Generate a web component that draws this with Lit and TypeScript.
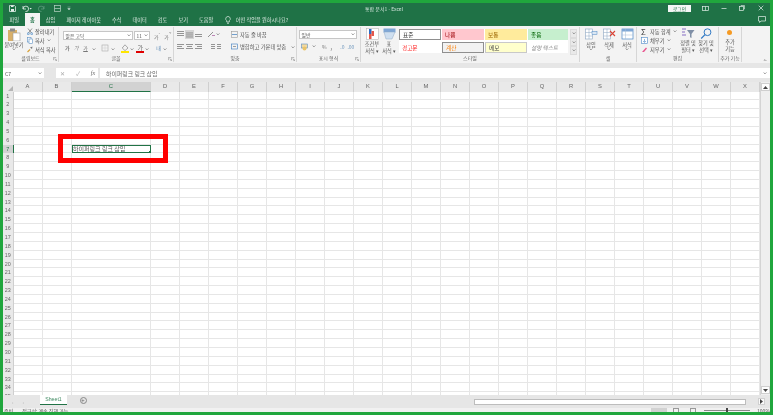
import { LitElement, html, css, svg } from "lit";
import { customElement } from "lit/decorators.js";

const COLS = ["A","B","C","D","E","F","G","H","I","J","K","L","M","N","O","P","Q","R","S","T","U","V","W","X"];
const TABS = ["파일","홈","삽입","페이지 레이아웃","수식","데이터","검토","보기","도움말"];
const STYLES = [
  ["표준", "s-normal"], ["나쁨", "s-bad"], ["보통", "s-neutral"], ["좋음", "s-good"],
  ["경고문", "s-warn"], ["계산", "s-calc"], ["메모", "s-note"], ["설명 텍스트", "s-expl"],
];

const chev = html`<svg class="chev" viewBox="0 0 5 3"><path d="M.7.5 2.5 2.3 4.3.5" fill="none" stroke="#666" stroke-width=".8"/></svg>`;
const launcher = html`<svg class="launch" viewBox="0 0 5 5"><path d="M.5.5h3v1M.5.5v3h1M2 2l2.3 2.3M4.5 2.8v1.7H2.8" fill="none" stroke="#777" stroke-width=".6"/></svg>`;

const ic = (w: number, h: number, body: unknown) => html`<svg class="ic" width=${w} height=${h} viewBox="0 0 ${w} ${h}">${body}</svg>`;
const lines = (pat: number[][]) => pat.map(([x, y, l]) => svg`<rect x=${x} y=${y} width=${l} height=".9" fill="#8a8a8a"/>`);

@customElement("app-root")
export class AppRoot extends LitElement {
  static styles = css`
    :host { display: block; width: 773px; height: 415px; overflow: hidden; }
    * { box-sizing: border-box; }
    .ic { flex: none; display: block; }
    .app { position: relative; width: 773px; height: 415px; border: 3px solid #20a63d; background: #e6e6e6; display: flex; flex-direction: column; overflow: hidden;
      font-family: "Noto Sans CJK KR", "Noto Sans", sans-serif; font-size: 5.5px; color: #555; filter: blur(.3px); }
    .title { height: 10px; background: #1f7246; display: flex; align-items: center; color: #e4efe9; flex: none; }
    .qat { display: flex; gap: 6px; align-items: center; padding-left: 6px; width: 362px; flex: none; }
    .doc { font-size: 5px; color: #cfe3d8; width: 303px; flex: none; }
    .title-right { flex: 1; display: flex; align-items: center; min-width: 0; }
    .login { background: #f4f6f5; color: #1f7246; width: 23px; height: 7px; line-height: 7px; text-align: center; font-size: 4.8px; flex: none; }
    .wins { display: flex; margin: 0 -3px 0 5px; align-items: center; flex: none; }
    .wins span { width: 18.5px; display: flex; justify-content: center; }
    .tabs { height: 13px; background: #1f7246; display: flex; align-items: stretch; flex: none; padding-left: 1px; color: #dbe9e1; font-size: 5.2px; }
    .tab { padding: 0 5.5px; display: flex; align-items: center; }
    .tab.on { background: #f3f3f3; color: #1f7246; font-weight: 700; }
    .tell { display: flex; align-items: center; gap: 5px; margin-left: 6px; }
    .comment { margin-left: auto; margin-right: 4px; display: flex; align-items: center; }

    .ribbon { height: 37px; background: #f3f3f3; display: flex; flex: none; }
    .group { display: flex; flex-direction: column; border-right: 1px solid #d6d6d6; flex: none; position: relative; margin: 1px 0; }
    .g-clip { width: 56px; } .g-font { width: 115px; } .g-align { width: 123px; } .g-num { width: 64px; }
    .g-style { width: 219px; } .g-cells { width: 57px; } .g-edit { width: 82px; } .g-add { width: 23px; }
    .body { flex: 1; display: flex; min-height: 0; }
    .glabel { height: 8px; line-height: 7px; text-align: center; font-size: 5px; color: #666; flex: none; }
    .launch { position: absolute; right: 1.5px; bottom: 1.5px; width: 4px; height: 4px; }
    .chev { width: 4px; height: 2.5px; flex: none; }
    .col { display: flex; flex-direction: column; }
    .big { display: flex; flex-direction: column; align-items: center; line-height: 7px; font-size: 5.2px; text-align: center; white-space: nowrap; padding-top: 1px; flex: none; }
    .row { display: flex; align-items: center; }
    .sel { background: #fff; border: 1px solid #c6c6c6; height: 9px; display: flex; align-items: center; justify-content: space-between; padding: 0 1.5px; font-size: 4.8px; flex: none; }
    .gl { color: #777; font-size: 5px; line-height: 8px; }
    .small { display: flex; align-items: center; gap: 2px; height: 9px; font-size: 5.3px; white-space: nowrap; }
    .collapse { margin: auto 3px 2px auto; }

    .clip-big { width: 22px; }
    .clip-small { margin-left: 2px; }
    .font-body { padding: 3px 0 0 4px; flex-direction: column; gap: 3px; }
    .font-row1 { gap: 1px; }
    .w-name { width: 70px; } .w-size { width: 16px; }
    .grow1 { margin-left: 3px; } .grow2 { margin-left: 3px; }
    .font-row2 { padding-left: 2px; height: 9px; }
    .gap-a { margin-left: 4.5px; }
    .b { font-weight: 700; } .i { font-style: italic; } .u { text-decoration: underline; }
    .phon { color: #4c7fb0; }
    .ml5 { margin-left: 5px; } .ml6 { margin-left: 6px; } .ml2 { margin-left: 2px; } .ml7 { margin-left: 7px; } .ml1 { margin-left: 1px; } .ml3 { margin-left: 3px; }
    .ml4 { margin-left: 4px; }

    .align-body { padding: 3px 0 0 2px; }
    .align-col { gap: 3px; width: 55px; }
    .align-wrap { gap: 3px; }
    .sq { display: flex; width: 9px; height: 9px; align-items: center; justify-content: center; flex: none; }
    .sq.on { background: #d4d4d4; }
    .angle { margin-left: 4px; display: flex; align-items: center; gap: 1px; }

    .num-body { padding: 3px 3px 0 2px; flex-direction: column; gap: 3px; }
    .w-num { width: 58px; }
    .num-row { padding-left: 2px; height: 9px; gap: 3px; }
    .dec { color: #6f97bd; }

    .big-cond { width: 18px; margin-left: 2px; }
    .big-table { width: 16px; }
    .gallery { display: grid; grid-template-columns: 42px 42px 42px 40px; grid-template-rows: 11px 11px; gap: 2px 1px; margin: 2px 0 0 2px; background: #fff; height: 24px; flex: none; }
    .st { display: flex; align-items: center; padding-left: 3px; font-size: 5.6px; }
    .s-normal { background: #fff; border: 1px solid #8f8f8f; color: #333; }
    .s-bad { background: #ffc7ce; color: #9c0006; }
    .s-neutral { background: #ffeb9c; color: #9c6500; }
    .s-good { background: #c6efce; color: #006100; }
    .s-warn { color: #ff2020; }
    .s-calc { background: #f2f2f2; color: #fa7d00; border: 1px solid #8f8f8f; }
    .s-note { background: #ffffcc; border: 1px solid #c9c9c9; color: #444; }
    .s-expl { color: #8a8a8a; font-style: italic; }
    .scroller { display: flex; flex-direction: column; width: 7px; height: 26px; margin: 2px 0 0 2px; }
    .scroller span { flex: 1; background: #e9e9e9; border: 1px solid #dcdcdc; display: flex; align-items: center; justify-content: center; }

    .cells-body { padding-left: 2.5px; gap: 1px; }
    .big-cell { width: 17px; }
    .cell-label { margin-top: 1px; }
    .edit-body { padding-left: 4px; }
    .edit-col { width: 38px; }
    .sigma { font-size: 8px; color: #444; line-height: 8px; width: 7px; }
    .big-edit { width: 18px; }
    .add-body { justify-content: center; }
    .add-big { padding-top: 3px; }
    .dot { width: 5px; height: 5px; border-radius: 50%; background: #f59a23; margin-bottom: 3px; }

    .gap1 { height: 5px; flex: none; background: #e6e6e6; }
    .fbar { height: 10px; display: flex; flex: none; }
    .namebox { width: 41px; background: #fff; display: flex; align-items: center; justify-content: space-between; padding: 0 2px; font-size: 5.2px; }
    .fdots { width: 12px; }
    .fbtns { width: 42px; background: #fff; display: grid; grid-template-columns: 12px 16px 10px; gap: 2px; align-items: center; justify-items: center; color: #aaa; font-size: 6px; }
    .fx { font-style: italic; color: #666; font-family: "Liberation Serif", serif; }
    .finput { flex: 1; margin-left: 2px; background: #fff; display: flex; align-items: center; padding-left: 6px; font-size: 5.9px; color: #666; }
    .fend { margin-left: auto; margin-right: 3px; display: flex; }
    .gap2 { height: 4px; flex: none; background: #e6e6e6; }

    .sheetwrap { flex: 1; display: flex; min-height: 0; overflow: hidden; background: #fff; }
    .grid { width: 757px; display: grid; grid-template-columns: 10.5px 29px 29px 79.5px repeat(21, 29px); grid-template-rows: 9.5px repeat(35, 8.85px); flex: none; overflow: hidden; align-content: start; }
    .ch { background: #e9e9e9; border-right: 1px solid #cfcfcf; text-align: center; font-size: 5.8px; line-height: 9px; color: #666; font-family: "Liberation Sans", sans-serif; }
    .ch.on { background: #d2d2d2; border-bottom: 1px solid #217346; color: #217346; }
    .corner { background: #e9e9e9; position: relative; }
    .tri { position: absolute; right: 1px; bottom: 1px; width: 0; height: 0; border-left: 5px solid transparent; border-bottom: 5px solid #b5b5b5; }
    .rh { background: #e9e9e9; border-right: 1px solid #cfcfcf; text-align: center; font-size: 5.4px; line-height: 8.5px; color: #666; font-family: "Liberation Sans", sans-serif; }
    .rh.on { background: #d2d2d2; border-right: 1px solid #217346; color: #217346; }
    .c { border-right: 1px solid #e6e6e6; border-bottom: 1px solid #e6e6e6; overflow: visible; white-space: nowrap; }
    .c.active { outline: 1px solid #217346; outline-offset: -1px; font-size: 6px; line-height: 8.5px; padding-left: 1.5px; color: #555; position: relative; }
    .handle { position: absolute; right: -1px; bottom: -1px; width: 2.5px; height: 2.5px; background: #217346; }
    .vscroll { flex: 1; background: #efefef; border-left: 1px solid #d4d4d4; display: flex; flex-direction: column; justify-content: space-between; align-items: center; padding: 1px 0; }
    .vb { width: 9px; height: 8px; background: #fdfdfd; border: 1px solid #cfcfcf; display: flex; align-items: center; justify-content: center; }

    .sheetbar { height: 13px; flex: none; background: #e6e6e6; display: flex; align-items: flex-start; }
    .navs { width: 37px; display: flex; gap: 9px; padding: 3px 0 0 9px; color: #b5b5b5; font-size: 5px; line-height: 7px; }
    .stab { width: 27px; height: 10px; background: #fff; border-bottom: 1px solid #217346; color: #3f8a62; font-size: 5.2px; line-height: 9px; text-align: center; font-family: "Liberation Sans", sans-serif; }
    .plus { margin: 2px 0 0 12.5px; width: 7px; height: 7px; border: 1px solid #888; border-radius: 50%; display: flex; align-items: center; justify-content: center; color: #666; font-size: 6px; line-height: 5px; }
    .hs { margin: 4px 0 0 auto; width: 272px; height: 6px; background: #fff; border: 1px solid #bdbdbd; }
    .hb { margin: 3px 5px 0 12px; width: 7px; height: 7px; background: #fafafa; border: 1px solid #d0d0d0; display: flex; align-items: center; justify-content: center; }
    .status { height: 4px; flex: none; background: #f1f1f1; display: flex; font-size: 5px; line-height: 5px; color: #555; overflow: hidden; padding-left: 1px; }
    .status .mid { margin-left: 9px; }
    .views { margin-left: auto; display: flex; align-items: flex-start; }
    .views i { display: block; width: 16.5px; height: 4px; }
    .views .cur { background: #d2d2d2; }
    .views .mark { position: relative; }
    .views .mark::after { content: ""; position: absolute; left: 6px; top: 0; width: 4px; height: 4px; border: 1px solid #999; }
    .zoom { width: 46px; height: 1px; background: #888; margin: 2px 7px 0 4px; position: relative; }
    .zoom::after { content: ""; position: absolute; left: 22px; top: -2px; width: 2px; height: 4px; background: #444; }

    .redbox { position: absolute; left: 55px; top: 131px; width: 110px; height: 29px; border: 5px solid #ff0000; }
  `;

  private tabsRow() {
    return html`<div class="tabs">
      ${TABS.map((t, i) => html`<div class="tab ${i === 1 ? "on" : ""}">${t}</div>`)}
      <div class="tell">
        <svg width="6" height="8" viewBox="0 0 6 8"><path d="M3 .5a2.3 2.3 0 0 0-1.3 4.2V6h2.6V4.7A2.3 2.3 0 0 0 3 .5zM2 7.3h2" fill="none" stroke="#e4efe9" stroke-width=".7"/></svg>
        <span>어떤 작업을 원하시나요?</span>
      </div>
      <div class="comment"><svg width="8" height="7" viewBox="0 0 8 7"><path d="M.5.5h7v4.5H3L1.6 6.5V5H.5z" fill="none" stroke="#e4efe9" stroke-width=".7"/></svg></div>
    </div>`;
  }

  private clipboard() {
    return html`<div class="group g-clip">
      <div class="body">
        <div class="big clip-big">
          ${ic(14, 13, svg`<rect x="1" y="2" width="9" height="11" fill="#d9b06a"/><rect x="3" y="0.5" width="5" height="3" fill="#8d8d8d"/><rect x="6" y="5" width="7" height="8" fill="#fff" stroke="#9a9a9a" stroke-width=".6"/>`)}
          <span>붙여넣기</span>${chev}
        </div>
        <div class="col clip-small">
          <div class="small">${ic(6, 7, svg`<path d="M1 .5 4.5 5M5 .5 1.5 5" stroke="#6a6a6a" stroke-width=".7" fill="none"/><circle cx="1.3" cy="5.7" r="1" fill="none" stroke="#2b79c2" stroke-width=".6"/><circle cx="4.7" cy="5.7" r="1" fill="none" stroke="#2b79c2" stroke-width=".6"/>`)}잘라내기</div>
          <div class="small">${ic(6, 7, svg`<rect x=".5" y=".5" width="3.5" height="4.5" fill="#fff" stroke="#5d8fc4" stroke-width=".6"/><rect x="2" y="2" width="3.5" height="4.5" fill="#fff" stroke="#5d8fc4" stroke-width=".6"/>`)}복사 ${chev}</div>
          <div class="small">${ic(6, 7, svg`<path d="M.5 6 3 3.5" stroke="#d8a23a" stroke-width="1.2"/><path d="M3 1.5 5.5.5 5 3z" fill="#777"/>`)}서식 복사</div>
        </div>
      </div>
      <div class="glabel">클립보드</div>${launcher}
    </div>`;
  }

  private font() {
    return html`<div class="group g-font">
      <div class="body font-body">
        <div class="row font-row1">
          <div class="sel w-name"><span>맑은 고딕</span>${chev}</div>
          <div class="sel w-size"><span>11</span>${chev}</div>
          <span class="gl grow1">가<sup>ˆ</sup></span><span class="gl grow2">가<sup>ˇ</sup></span>
        </div>
        <div class="row font-row2">
          <span class="gl b">가</span><span class="gl i gap-a">가</span><span class="gl u gap-a">가</span><span class="gap-a">${chev}</span>
          <span class="ml5">${ic(8, 8, svg`<rect x="1" y="1" width="6" height="6" fill="none" stroke="#aaa" stroke-width=".6"/><path d="M4 1v6M1 4h6" stroke="#ccc" stroke-width=".5"/>`)}</span><span class="ml2">${chev}</span>
          <span class="ml6">${ic(8, 9, svg`<path d="M4 .8 7 4 4 6.6 1.2 4z" fill="none" stroke="#777" stroke-width=".6"/><rect y="7" width="8" height="2" fill="#ffe600"/>`)}</span><span class="ml1">${chev}</span>
          <span class="ml2">${ic(8, 9, svg`<text x="1.5" y="5.8" font-size="6" fill="#666" font-family="Noto Sans CJK KR">가</text><rect y="7" width="8" height="2" fill="#e00000"/>`)}</span><span class="ml1">${chev}</span>
          <span class="gl phon ml7">내</span><span class="ml2">${chev}</span>
        </div>
      </div>
      <div class="glabel">글꼴</div>${launcher}
    </div>`;
  }

  private align() {
    const sq = (hl: boolean, pat: number[][]) => html`<span class="sq ${hl ? "on" : ""}">${ic(7, 7, lines(pat))}</span>`;
    return html`<div class="group g-align">
      <div class="body align-body">
        <div class="col align-col">
          <div class="row">
            ${sq(false, [[0,0,7],[0,2,7],[0,4,7]])}${sq(true, [[0,1.5,7],[0,3.5,7],[0,5.5,7]])}${sq(false, [[0,3,7],[0,5,7]])}
            <span class="angle">${ic(8, 7, svg`<path d="M1 6 6 1" stroke="#777" stroke-width=".8"/><path d="M5 4.5h3" stroke="#b06aa8" stroke-width=".8"/>`)}${chev}</span>
          </div>
          <div class="row">
            ${sq(false, [[0,1,7],[0,3,5],[0,5,7]])}${sq(false, [[0,1,7],[1,3,5],[0,5,7]])}${sq(false, [[0,1,7],[2,3,5],[0,5,7]])}
            <span class="ml4">${sq(false, [[3,1,4],[3,3,4],[3,5,4]])}</span>${sq(false, [[0,1,4],[0,3,4],[0,5,4]])}
          </div>
        </div>
        <div class="col align-wrap">
          <div class="small">${ic(7, 7, svg`<rect x=".5" y=".5" width="6" height="6" fill="none" stroke="#999" stroke-width=".6"/><path d="M1 3.5h5" stroke="#3a7bbf" stroke-width=".7"/>`)}자동 줄 바꿈</div>
          <div class="small">${ic(7, 7, svg`<rect x=".5" y="1" width="6" height="5" fill="none" stroke="#3a7bbf" stroke-width=".6"/><path d="M2 3.5h3" stroke="#777" stroke-width=".7"/>`)}병합하고 가운데 맞춤 <span class="ml3">${chev}</span></div>
        </div>
      </div>
      <div class="glabel">맞춤</div>${launcher}
    </div>`;
  }

  private number() {
    return html`<div class="group g-num">
      <div class="body num-body">
        <div class="sel w-num"><span>일반</span>${chev}</div>
        <div class="row num-row">
          ${ic(8, 8, svg`<rect x=".5" y="1" width="6" height="4" fill="#f3d9a0" stroke="#5d8fc4" stroke-width=".6"/><circle cx="3.5" cy="5.5" r="2" fill="#e9c46a"/>`)}${chev}
          <span class="gl ml3">%</span><span class="gl ml1 b">,</span>
          <span class="gl dec ml5">.0</span><span class="gl dec">.00</span>
        </div>
      </div>
      <div class="glabel">표시 형식</div>${launcher}
    </div>`;
  }

  private styleGroup() {
    return html`<div class="group g-style">
      <div class="body">
        <div class="big big-cond">
          ${ic(13, 12, svg`<rect x=".5" y=".5" width="12" height="11" fill="#fff" stroke="#aaa" stroke-width=".5"/><rect x="3" y="1" width="2.5" height="5" fill="#2b6cc4"/><rect x="5.5" y="3" width="2.5" height="5" fill="#e2574c"/><rect x="3" y="6" width="2.5" height="5" fill="#e2574c"/>`)}
          <span>조건부</span><span>서식 ▾</span>
        </div>
        <div class="big big-table">
          ${ic(13, 12, svg`<rect x=".5" y=".5" width="12" height="4" fill="#7fa7d6"/><path d="M1 4 12 4 9 11H3z" fill="#cfdff0" stroke="#8fa9c6" stroke-width=".5"/>`)}
          <span>표</span><span>서식 ▾</span>
        </div>
        <div class="gallery">
          ${STYLES.map(([t, c]) => html`<div class="st ${c}">${t}</div>`)}
        </div>
        <div class="scroller"><span>${chev}</span><span>${chev}</span><span>${chev}</span></div>
      </div>
      <div class="glabel">스타일</div>
    </div>`;
  }

  private cells() {
    const cell = (label: string, icon: unknown) => html`<div class="big big-cell">${icon}<span class="cell-label">${label}</span>${chev}</div>`;
    const base = svg`<rect x=".5" y="1" width="7" height="10" fill="#fff" stroke="#8aa4c0" stroke-width=".6"/><path d="M.5 4.5h7M.5 8h7M4 1v10" stroke="#8aa4c0" stroke-width=".5"/>`;
    return html`<div class="group g-cells">
      <div class="body cells-body">
        ${cell("삽입", ic(13, 12, svg`${base}<rect x="7" y="3.5" width="5" height="3" fill="#dbe7f3" stroke="#4a87c6" stroke-width=".5"/>`))}
        ${cell("삭제", ic(13, 12, svg`${base}<path d="M7 3 12 8M12 3 7 8" stroke="#d94436" stroke-width="1.1"/>`))}
        ${cell("서식", ic(13, 12, svg`<rect x="1" y="1" width="11" height="10" fill="#fff" stroke="#4a87c6" stroke-width=".7"/><rect x="1" y="1" width="11" height="2.5" fill="#7fa7d6"/><path d="M4.5 1v10M1 7h11" stroke="#a5bcd4" stroke-width=".5"/>`))}
      </div>
      <div class="glabel">셀</div>
    </div>`;
  }

  private editing() {
    return html`<div class="group g-edit">
      <div class="body edit-body">
        <div class="col edit-col">
          <div class="small"><span class="sigma">Σ</span>자동 합계 ${chev}</div>
          <div class="small">${ic(7, 7, svg`<rect x=".5" y=".5" width="6" height="6" fill="#fff" stroke="#4a87c6" stroke-width=".6"/><path d="M3.5 2v3M2 4l1.5 1.5L5 4" stroke="#4a87c6" stroke-width=".6" fill="none"/>`)}채우기 ${chev}</div>
          <div class="small">${ic(7, 7, svg`<path d="M1 6 3 3.8 5 1.5l1 1L3 6z" fill="#e9558f"/>`)}지우기 ${chev}</div>
        </div>
        <div class="big big-edit">
          ${ic(14, 11, svg`<path d="M1 1h4M1 4h3M1 7h4" stroke="#7a5fc0" stroke-width=".9"/><path d="M6 2h7.5L10.5 6v4l-1.5-.8V6z" fill="#7f8fa6"/>`)}
          <span>정렬 및</span><span>필터 ▾</span>
        </div>
        <div class="big big-edit">
          ${ic(12, 11, svg`<circle cx="7.5" cy="4.2" r="3.4" fill="none" stroke="#2f78c4" stroke-width="1"/><path d="M5 6.6 1.2 10.5" stroke="#2f78c4" stroke-width="1.2"/>`)}
          <span>찾기 및</span><span>선택 ▾</span>
        </div>
      </div>
      <div class="glabel">편집</div>
    </div>`;
  }

  private addins() {
    return html`<div class="group g-add">
      <div class="body add-body">
        <div class="big add-big">
          <span class="dot"></span>
          <span>추가</span><span>기능</span>
        </div>
      </div>
      <div class="glabel">추가 기능</div>
    </div>`;
  }

  private grid() {
    const cells: unknown[] = [html`<div class="corner"><div class="tri"></div></div>`];
    COLS.forEach((c) => cells.push(html`<div class="ch ${c === "C" ? "on" : ""}">${c}</div>`));
    for (let r = 1; r <= 35; r++) {
      cells.push(html`<div class="rh ${r === 7 ? "on" : ""}">${r}</div>`);
      COLS.forEach((c) => {
        const active = r === 7 && c === "C";
        cells.push(active
          ? html`<div class="c active">하이퍼링크 링크 삽입<div class="handle"></div></div>`
          : html`<div class="c"></div>`);
      });
    }
    return html`<div class="grid">${cells}</div>`;
  }

  render() {
    return html`<div class="app">
      <div class="title">
        <div class="qat">
          ${ic(7, 7, svg`<path d="M.5.5h5l1 1v5h-6z" fill="none" stroke="#e4efe9" stroke-width=".8"/><rect x="2" y="4" width="3" height="2.5" fill="#e4efe9"/><rect x="2" y=".5" width="2.5" height="1.5" fill="#e4efe9"/>`)}
          ${ic(10, 7, svg`<path d="M1 1v3h3M1.2 4A2.7 2.7 0 1 1 3.5 6.5" fill="none" stroke="#e4efe9" stroke-width=".8"/><path d="M7.5 3h2.3L8.6 4.5z" fill="#e4efe9"/>`)}
          ${ic(10, 7, svg`<path d="M6 1v3H3M5.8 4A2.7 2.7 0 1 0 3.5 6.5" fill="none" stroke="#5d9a7c" stroke-width=".8"/>`)}
          ${ic(7, 7, svg`<rect x=".5" y=".5" width="6" height="6" fill="none" stroke="#b9d3c5" stroke-width=".7"/><path d="M.5 3.5h6" stroke="#b9d3c5" stroke-width=".7"/>`)}
          ${ic(4, 5, svg`<path d="M.5 1h3M.7 2.5h2.6L2 4z" fill="#e4efe9" stroke="#e4efe9" stroke-width=".3"/>`)}
        </div>
        <div class="doc">통합 문서1 - Excel</div>
        <div class="title-right">
          <div class="login">로그인</div>
          <div class="wins">
            <span>${ic(7, 5, svg`<rect x=".5" y=".5" width="6" height="4" fill="none" stroke="#e4efe9" stroke-width=".7"/><path d="M3.5 .5v4" stroke="#e4efe9" stroke-width=".7"/>`)}</span>
            <span>${ic(6, 5, svg`<path d="M.5 2.5h5" stroke="#e4efe9" stroke-width=".7"/>`)}</span>
            <span>${ic(6, 6, svg`<rect x=".5" y="1.5" width="4" height="4" fill="none" stroke="#e4efe9" stroke-width=".7"/><path d="M2 1V.5h3.5V4H5" fill="none" stroke="#e4efe9" stroke-width=".6"/>`)}</span>
            <span>${ic(6, 6, svg`<path d="M.7.7l4.6 4.6M5.3.7.7 5.3" stroke="#e4efe9" stroke-width=".7"/>`)}</span>
          </div>
        </div>
      </div>
      ${this.tabsRow()}
      <div class="ribbon">
        ${this.clipboard()}${this.font()}${this.align()}${this.number()}${this.styleGroup()}${this.cells()}${this.editing()}${this.addins()}
        <svg class="chev collapse" viewBox="0 0 5 3"><path d="M.7 2.5 2.5.7 4.3 2.5" fill="none" stroke="#666" stroke-width=".8"/></svg>
      </div>
      <div class="gap1"></div>
      <div class="fbar">
        <div class="namebox"><span>C7</span>${chev}</div>
        <div class="fdots"></div>
        <div class="fbtns"><span>✕</span><span>✓</span><span class="fx">fx</span></div>
        <div class="finput"><span>하이퍼링크 링크 삽입</span><span class="fend">${chev}</span></div>
      </div>
      <div class="gap2"></div>
      <div class="sheetwrap">
        ${this.grid()}
        <div class="vscroll">
          <div class="vb"><svg width="5" height="3" viewBox="0 0 5 3"><path d="M2.5 0 5 3H0z" fill="#444"/></svg></div>
          <div class="vb"><svg width="5" height="3" viewBox="0 0 5 3"><path d="M2.5 3 5 0H0z" fill="#444"/></svg></div>
        </div>
      </div>
      <div class="sheetbar">
        <div class="navs"><span>‹</span><span>›</span></div>
        <div class="stab">Sheet1</div>
        <div class="plus">+</div>
        <div class="hs"></div>
        <div class="hb"><svg width="3" height="5" viewBox="0 0 3 5"><path d="M0 0 3 2.5 0 5z" fill="#444"/></svg></div>
      </div>
      <div class="status">
        <span>준비</span><span class="mid">접근성: 계속 진행 가능</span>
        <div class="views">
          <i class="cur"></i><i class="mark"></i><i class="mark"></i>
          <div class="zoom"></div><span>100%</span>
        </div>
      </div>
      <div class="redbox"></div>
    </div>`;
  }
}
